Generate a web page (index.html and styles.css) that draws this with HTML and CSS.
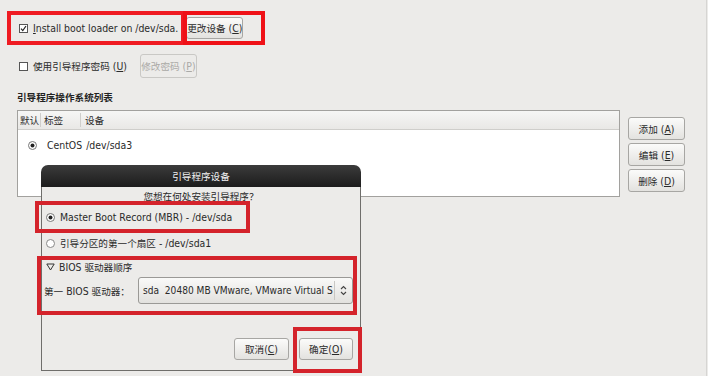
FILE: index.html
```html
<!DOCTYPE html>
<html lang="zh-CN">
<head>
<meta charset="utf-8">
<title>Boot loader</title>
<link rel="stylesheet" href="styles.css">
</head>
<body>
<div class="screen">
  <div class="row r1">
    <label class="chk">
      <svg class="cb" width="9" height="9" viewBox="0 0 9 9"><rect x="0.5" y="0.5" width="8" height="8" fill="#fff" stroke="#555"/><path d="M2 4.6 L3.8 6.6 L7 2" fill="none" stroke="#222" stroke-width="1.2"/></svg>
      <span><u>I</u>nstall boot loader on /dev/sda.</span>
    </label>
    <button class="btn b-change"><span class="zh">更改设备</span>&nbsp;(<u>C</u>)</button>
  </div>
  <div class="row r2">
    <label class="chk">
      <svg class="cb" width="9" height="9" viewBox="0 0 9 9"><rect x="0.5" y="0.5" width="8" height="8" fill="#fff" stroke="#555"/></svg>
      <span><span class="zh">使用引导程序密码</span> (<u>U</u>)</span>
    </label>
    <button class="btn b-pass" disabled><span class="zh">修改密码</span>&nbsp;(<u>P</u>)</button>
  </div>
  <h3 class="sec zh">引导程序操作系统列表</h3>
  <div class="oslist">
    <div class="table">
      <div class="thead">
        <div class="th c1 zh">默认</div>
        <div class="th c2 zh">标签</div>
        <div class="th c3 zh">设备</div>
      </div>
      <div class="trow">
        <div class="td c1"><svg width="9" height="9" viewBox="0 0 9 9"><circle cx="4.5" cy="4.5" r="4" fill="#fff" stroke="#777"/><circle cx="4.5" cy="4.5" r="2" fill="#222"/></svg></div>
        <div class="td c2">CentOS</div>
        <div class="td c3">/dev/sda3</div>
      </div>
    </div>
    <div class="side">
      <button class="btn sbtn"><span class="zh">添加</span>&nbsp;(<u>A</u>)</button>
      <button class="btn sbtn"><span class="zh">编辑</span>&nbsp;(<u>E</u>)</button>
      <button class="btn sbtn"><span class="zh">删除</span>&nbsp;(<u>D</u>)</button>
    </div>
  </div>

  <div class="dialog">
    <div class="dlg-title zh">引导程序设备</div>
    <div class="dlg-body">
      <div class="prompt zh">您想在何处安装引导程序？</div>
      <label class="opt o1">
        <svg width="9" height="9" viewBox="0 0 9 9"><circle cx="4.5" cy="4.5" r="4" fill="#fff" stroke="#777"/><circle cx="4.5" cy="4.5" r="2" fill="#222"/></svg>
        <span>Master Boot Record (MBR) - /dev/sda</span>
      </label>
      <label class="opt o2">
        <svg width="9" height="9" viewBox="0 0 9 9"><circle cx="4.5" cy="4.5" r="4" fill="#fff" stroke="#888"/></svg>
        <span><span class="zh">引导分区的第一个扇区</span> - /dev/sda1</span>
      </label>
      <div class="expander">
        <svg width="9" height="8" viewBox="0 0 9 8"><path d="M0.8 1 L8.2 1 L4.5 7 Z" fill="none" stroke="#333" stroke-width="1"/></svg>
        <span>BIOS <span class="zh">驱动器顺序</span></span>
      </div>
      <div class="combo-row">
        <span class="clabel"><span class="zh">第一</span> BIOS <span class="zh">驱动器：</span></span>
        <div class="combo">
          <span class="ctext">sda&nbsp;&nbsp;20480 MB VMware, VMware Virtual S</span>
          <span class="csep"></span>
          <svg class="step" width="7" height="11" viewBox="0 0 7 11"><path d="M1 4 L3.5 1.5 L6 4 M1 7 L3.5 9.5 L6 7" fill="none" stroke="#444" stroke-width="1.1"/></svg>
        </div>
      </div>
      <div class="dlg-buttons">
        <button class="btn dbtn cancel"><span class="zh">取消</span>(<u>C</u>)</button>
        <button class="btn dbtn ok"><span class="zh">确定</span>(<u>O</u>)</button>
      </div>
    </div>
  </div>

  <div class="mark m1"></div>
  <div class="mark m2"></div>
  <div class="mark m3"></div>
  <div class="mark m4"></div>
  <div class="mark m5"></div>
</div>
</body>
</html>
```
FILE: styles.css
```css
html, body {
  margin: 0;
  padding: 0;
  background: #ecebe9;
}
body {
  font-family: "DejaVu Sans Condensed", "DejaVu Sans", "Noto Sans CJK SC", sans-serif;
  font-stretch: condensed;
  font-size: 10.4px;
  color: #2a2a2a;
}
.zh {
  font-family: "Noto Sans CJK SC", sans-serif;
  font-size: 9.6px;
}
u {
  text-decoration: underline;
  text-underline-offset: 1px;
}
.screen {
  position: relative;
  width: 707px;
  height: 376px;
  border-right: 1px solid #d6d5d3;
  padding-left: 17px;
  box-sizing: border-box;
  overflow: hidden;
}
.row {
  display: flex;
  align-items: center;
}
.r1 {
  padding-top: 17px;
  height: 22px;
}
.r2 {
  margin-top: 15px;
  height: 24px;
}
.chk {
  display: flex;
  align-items: center;
  gap: 5px;
  margin-left: 2px;
  white-space: nowrap;
}
.btn {
  font-family: inherit;
  font-stretch: condensed;
  font-size: 10.4px;
  color: #2a2a2a;
  background: linear-gradient(#fbfbfa, #e3e2df);
  border: 1px solid #a7a6a3;
  border-radius: 3px;
  padding: 0;
  display: flex;
  align-items: center;
  justify-content: center;
  box-sizing: border-box;
  white-space: nowrap;
  overflow: visible;
}
.b-change {
  margin-left: 8px;
  width: 57px;
  height: 22px;
}
.b-pass {
  margin-left: 13px;
  width: 57px;
  height: 24px;
  color: #aaa9a6;
  background: #ecebe9;
  border-color: #c9c8c5;
}
.sec {
  margin: 12px 0 0 0;
  font-weight: bold;
  line-height: 14px;
  height: 14px;
  color: #222;
}
.oslist {
  margin-top: 6px;
  display: flex;
  gap: 8px;
}
.table {
  width: 603px;
  height: 87px;
  box-sizing: border-box;
  border: 1px solid #a2a19e;
  background: #fff;
}
.thead {
  display: flex;
  height: 18px;
  background: linear-gradient(#f6f6f5, #e9e8e6);
  border-bottom: 1px solid #cfcecb;
  align-items: center;
}
.th {
  height: 14px;
  line-height: 14px;
  box-sizing: border-box;
  padding-left: 2px;
  white-space: nowrap;
}
.thead .c1 { width: 23px; border-right: 1px solid #cfcecb; }
.thead .c2 { width: 40px; border-right: 1px solid #cfcecb; padding-left: 3px; }
.thead .c3 { padding-left: 4px; }
.trow {
  display: flex;
  align-items: center;
  height: 16px;
  margin-top: 7px;
  white-space: nowrap;
}
.td.c1 { width: 29px; display: flex; justify-content: center; }
.td.c2 { margin-right: 4px; }
.side {
  display: flex;
  flex-direction: column;
  gap: 3px;
  padding-top: 7px;
}
.sbtn {
  width: 57px;
  height: 23px;
}

.dialog {
  position: absolute;
  left: 41px;
  top: 165px;
  width: 320px;
  display: flex;
  flex-direction: column;
}
.dlg-title {
  height: 22px;
  line-height: 22px;
  text-align: center;
  color: #f2f2f2;
  background: linear-gradient(#3b3b3b, #1c1c1c);
  border-radius: 7px 7px 0 0;
}
.dlg-body {
  background: #ecebe9;
  border: 1px solid #6f6e6b;
  border-top: none;
  padding: 2px 7px 10px 2px;
  display: flex;
  flex-direction: column;
}
.prompt {
  text-align: center;
  line-height: 14px;
  height: 14px;
  padding-left: 5px;
}
.opt {
  display: flex;
  align-items: center;
  gap: 5px;
  height: 18px;
  padding-left: 2px;
  white-space: nowrap;
}
.o1 { margin-top: 5px; }
.o2 { margin-top: 8px; }
.expander {
  display: flex;
  align-items: center;
  gap: 4px;
  height: 18px;
  margin-top: 6px;
  padding-left: 2px;
  white-space: nowrap;
}
.combo-row {
  display: flex;
  align-items: center;
  margin-top: 1px;
  height: 27px;
}
.clabel {
  width: 94px;
  flex: none;
  white-space: nowrap;
}
.combo {
  width: 218px;
  height: 27px;
  box-sizing: border-box;
  border: 1px solid #9a9996;
  border-radius: 3px;
  background: linear-gradient(#f9f9f8, #e2e1de);
  display: flex;
  align-items: center;
  padding-left: 4px;
}
.ctext {
  flex: 1;
  font-size: 10.1px;
  white-space: nowrap;
  overflow: hidden;
}
.csep {
  width: 1px;
  height: 19px;
  background: #c9c8c5;
  margin: 0 5px 0 1px;
}
.step {
  margin-right: 5px;
}
.dlg-buttons {
  display: flex;
  justify-content: flex-end;
  gap: 10px;
  margin-top: 34px;
}
.dbtn {
  height: 22px;
}
.cancel { width: 55px; }
.ok { width: 54px; }

.mark {
  position: absolute;
  box-sizing: border-box;
  border: 4px solid #e11a22;
}
.m1 { left: 7px; top: 11px; width: 178px; height: 34px; border-color: #ef1b22; }
.m2 { left: 183px; top: 11px; width: 82px; height: 34px; border-color: #ef1117; }
.m3 { left: 35px; top: 201px; width: 215px; height: 32px; border-color: #d4232b; }
.m4 { left: 37px; top: 256px; width: 320px; height: 59px; border-color: #d4232b; }
.m5 { left: 293px; top: 327px; width: 69px; height: 46px; border-color: #d4232b; }
```
